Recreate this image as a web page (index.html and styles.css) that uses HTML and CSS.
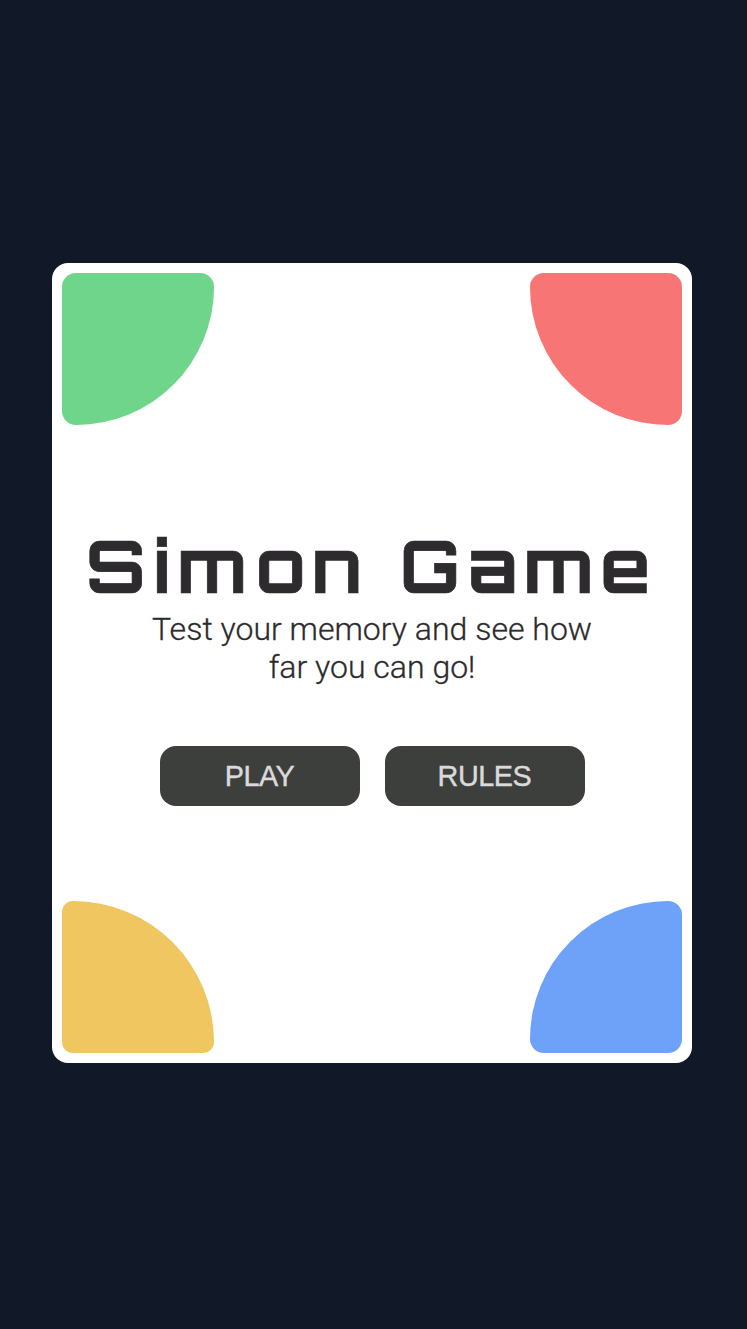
FILE: index.html
```html
<!DOCTYPE html>
<html lang="en">
<head>
<meta charset="utf-8">
<title>Simon Game</title>
<link rel="stylesheet" href="styles.css">
</head>
<body>
<main class="card">
  <div class="row">
    <div class="pad green"></div>
    <div class="pad red"></div>
  </div>
  <section class="intro">
    <h1 class="title">Simon Game</h1>
    <p class="subtitle">Test your memory and see how<br>far you can go!</p>
    <div class="actions">
      <button class="button">PLAY</button>
      <button class="button">RULES</button>
    </div>
  </section>
  <div class="row">
    <div class="pad yellow"></div>
    <div class="pad blue"></div>
  </div>
</main>
</body>
</html>
```
FILE: styles.css
```css
* { box-sizing: border-box; }
body {
  margin: 0;
  min-height: 1329px;
  padding: 263px 55px 0 52px;
  background: #111827;
}
.card {
  display: flex;
  flex-direction: column;
  width: 640px;
  height: 800px;
  padding: 10px;
  border-radius: 16px;
  background: #fff;
}
.row { display: flex; justify-content: space-between; }
.pad { width: 152px; height: 152px; border-radius: 14px; }
.green { background: #6ed58b; border-bottom-right-radius: 138px; }
.red { background: #f87575; border-bottom-left-radius: 138px; }
.yellow { background: #efc65f; border-radius: 11px 141px 11px 11px; }
.blue { background: #6ea1f8; border-top-left-radius: 138px; }
.intro {
  flex: 1;
  display: flex;
  flex-direction: column;
  align-items: center;
  padding-top: 96px;
}
.title {
  margin: 0 0 1px;
  font: 700 72px/88px Orbitron, "DejaVu Sans", sans-serif;
  letter-spacing: 8px;
  white-space: nowrap;
  color: #2e2b2f;
  -webkit-text-stroke: 0.7px #2e2b2f;
}
.subtitle {
  margin: 0;
  font: 300 32px/38px Roboto, sans-serif;
  text-align: center;
  color: #2b2b2b;
  -webkit-text-stroke: 0.3px #2b2b2b;
}
.actions { display: flex; gap: 25px; margin-top: 60px; padding-left: 1px; }
.button {
  width: 200px;
  height: 60px;
  padding: 0 1px 0 0;
  border: 0;
  border-radius: 16px;
  background: #3d3f3d;
  color: #dadada;
  font: 28.8px/60px "Liberation Sans", Arial, sans-serif;
  letter-spacing: -0.45px;
  -webkit-text-stroke: 0.4px #dadada;
}
```
